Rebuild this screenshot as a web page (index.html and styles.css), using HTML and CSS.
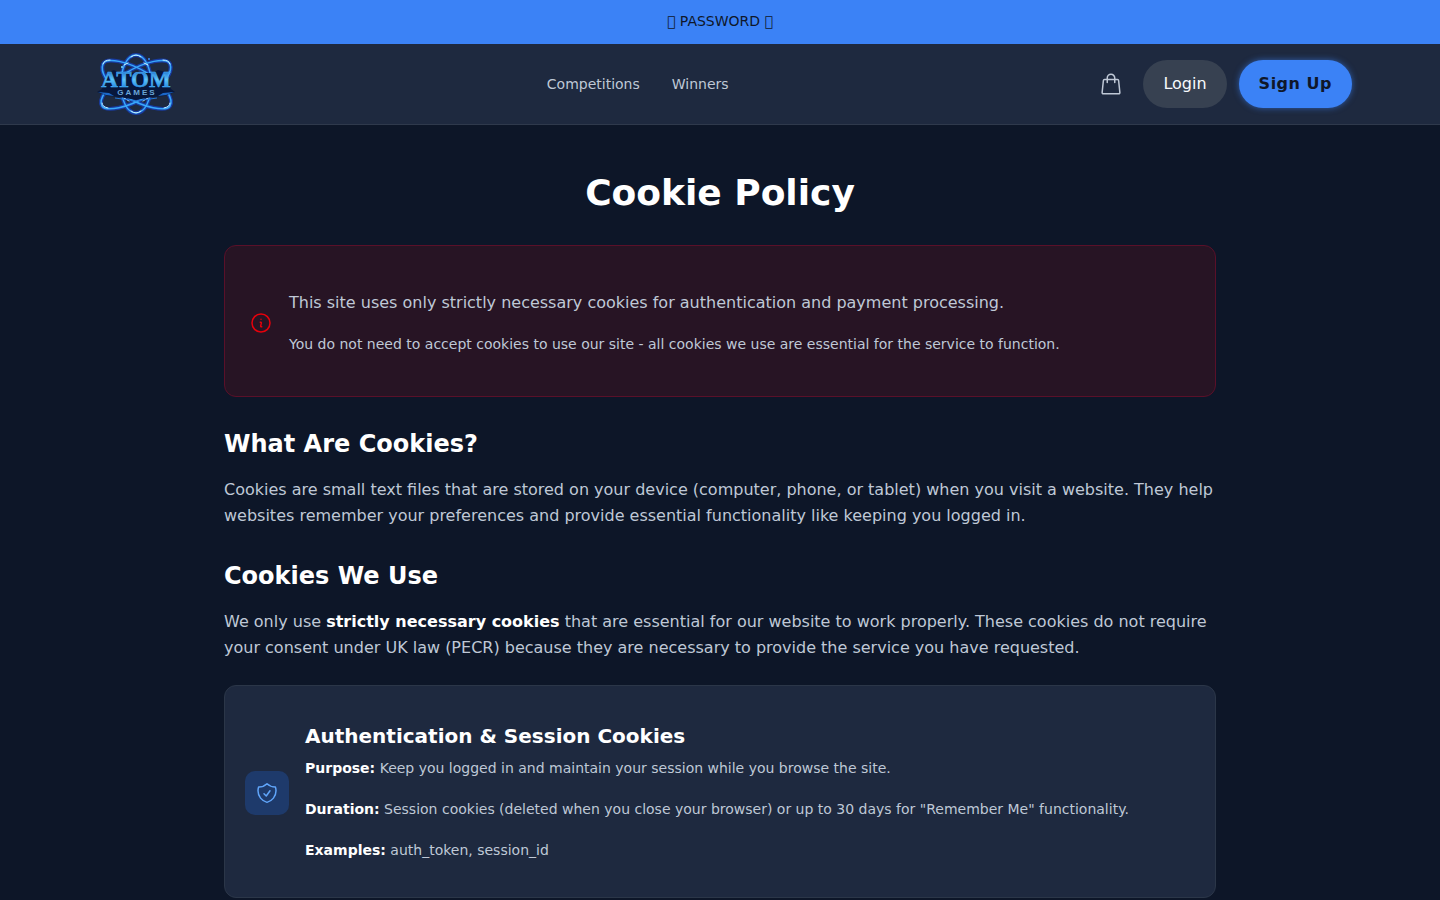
FILE: index.html
```html
<!DOCTYPE html>
<html lang="en">
<head>
  <meta charset="UTF-8">
  <title>Cookie Policy - Atom Games</title>
  <meta name="viewport" content="width=device-width, initial-scale=1.0">
  <link rel="stylesheet" href="styles.css">
</head>
<body>
  <div class="promo-bar">&#xE900; PASSWORD &#xE900;</div>

  <header class="header">
    <div class="header-inner">
      <a href="#" class="logo">
        <svg width="96" height="64" viewBox="0 0 96 64" role="img" aria-label="Atom Games">
          <defs>
            <linearGradient id="metal" x1="0" y1="0" x2="0" y2="1">
              <stop offset="0.15" stop-color="#1d6fd0"/>
              <stop offset="0.5" stop-color="#5cc4f8"/>
              <stop offset="0.85" stop-color="#1f84e6"/>
            </linearGradient>
          </defs>
          <!-- orbit glow -->
          <g fill="none" stroke="#1546d8" stroke-width="4" opacity="0.65">
            <path d="M48 3c9 0 15 13 15 29S57 61 48 61 33 48 33 32 39 3 48 3z"/>
            <path d="M15 12c3-7 25-3 44 9s27 27 23 33-26 2-45-10S12 19 15 12z"/>
            <path d="M82 12c-3-7-25-3-44 9S10 48 14 54s26 2 45-10S85 19 82 12z"/>
          </g>
          <!-- orbits -->
          <g fill="none" stroke="#38a8fa" stroke-width="1.5">
            <path d="M48 3c9 0 15 13 15 29S57 61 48 61 33 48 33 32 39 3 48 3z"/>
            <path d="M15 12c3-7 25-3 44 9s27 27 23 33-26 2-45-10S12 19 15 12z"/>
            <path d="M82 12c-3-7-25-3-44 9S10 48 14 54s26 2 45-10S85 19 82 12z"/>
          </g>
          <g fill="none" stroke="#c9f1ff" stroke-width="1" stroke-linecap="round">
            <path d="M43 5q5-4 10 0M43 59q5 4 10 0"/>
            <path d="M15 12q1-4 7-4M82 12q-1-4-7-4M14 51q0 4 6 5M82 51q0 4-6 5"/>
            <path d="M36 13l4-2M60 13l-4-2M36 46l5 3M60 46l-5 3"/>
          </g>
          <!-- name plate -->
          <path d="M20 20l6-2 6 3h32l6-3 7 2 6 17 4 3-11 4-12 1-16 3-16-3-12-1-11-4 5-3z" fill="#07173c"/>
          <path d="M10 40l11 1 5 3-8-1zM86 40l-11 1-5 3 8-1z" fill="#1b67c8"/>
          <path d="M27 46l21 3 21-3" fill="none" stroke="#2376d8" stroke-width="1"/>
          <text x="48" y="35" class="logo-name">ATOM</text>
          <text x="49" y="43" class="logo-sub">GAMES</text>
          <circle cx="34" cy="15" r="1" fill="#74dcff"/>
          <circle cx="61" cy="7" r="1" fill="#3c8cff"/>
        </svg>
      </a>

      <nav class="nav">
        <a href="#">Competitions</a>
        <a href="#">Winners</a>
      </nav>

      <div class="actions">
        <button class="cart-btn" aria-label="Cart">
          <svg width="24" height="24" viewBox="0 0 24 24" fill="none" stroke="currentColor" stroke-width="1.5" stroke-linecap="round" stroke-linejoin="round">
            <path d="M15.75 10.5V6a3.75 3.75 0 1 0-7.5 0v4.5m11.36-1.99 1.26 12c.07.67-.45 1.24-1.12 1.24H4.25a1.13 1.13 0 0 1-1.12-1.24l1.26-12a1.13 1.13 0 0 1 1.12-1.01h12.98c.57 0 1.06.43 1.12 1.01Z"/>
          </svg>
        </button>
        <button class="btn btn-login">Login</button>
        <button class="btn btn-signup">Sign Up</button>
      </div>
    </div>
  </header>

  <main class="page">
    <h1>Cookie Policy</h1>

    <div class="notice">
      <svg class="notice-icon" width="24" height="24" viewBox="0 0 24 24" fill="none" stroke="currentColor" stroke-width="1.5" stroke-linecap="round" stroke-linejoin="round">
        <circle cx="12" cy="12" r="9"/>
        <path d="m11.25 11.25.04-.02a.75.75 0 0 1 1.06.85l-.7 2.84a.75.75 0 0 0 1.06.85l.04-.02M12 8.25h.01"/>
      </svg>
      <div class="notice-text">
        <p>This site uses only strictly necessary cookies for authentication and payment processing.</p>
        <p class="small">You do not need to accept cookies to use our site - all cookies we use are essential for the service to function.</p>
      </div>
    </div>

    <h2>What Are Cookies?</h2>
    <p>Cookies are small text files that are stored on your device (computer, phone, or tablet) when you visit a website. They help websites remember your preferences and provide essential functionality like keeping you logged in.</p>

    <h2>Cookies We Use</h2>
    <p>We only use <strong>strictly necessary cookies</strong> that are essential for our website to work properly. These cookies do not require your consent under UK law (PECR) because they are necessary to provide the service you have requested.</p>

    <div class="card">
      <div class="card-icon">
        <svg width="24" height="24" viewBox="0 0 24 24" fill="none" stroke="currentColor" stroke-width="1.5" stroke-linecap="round" stroke-linejoin="round">
          <path d="M9 12.75 11.25 15 15 9.75m-3-7.04A11.96 11.96 0 0 1 3.6 6 11.99 11.99 0 0 0 3 9.75c0 5.59 3.82 10.29 9 11.62 5.18-1.33 9-6.03 9-11.62 0-1.31-.21-2.57-.6-3.75h-.15c-3.2 0-6.1-1.25-8.25-3.29Z"/>
        </svg>
      </div>
      <div class="card-body">
        <h3>Authentication &amp; Session Cookies</h3>
        <p class="small"><strong>Purpose:</strong> Keep you logged in and maintain your session while you browse the site.</p>
        <p class="small"><strong>Duration:</strong> Session cookies (deleted when you close your browser) or up to 30 days for "Remember Me" functionality.</p>
        <p class="small"><strong>Examples:</strong> auth_token, session_id</p>
      </div>
    </div>
  </main>
</body>
</html>
```
FILE: styles.css
```css
* { box-sizing: border-box; margin: 0; padding: 0; }

body {
  font-family: "DejaVu Sans", sans-serif;
  font-size: 16px;
  line-height: 26px;
  background: #0d1628;
  color: #bfc8d6;
}

a {
  color: inherit;
  text-decoration: none;
}

button {
  font-family: inherit;
  border: none;
  cursor: pointer;
}

.promo-bar {
  background: #3b82f6;
  color: #0f172a;
  text-align: center;
  font-size: 14px;
  line-height: 20px;
  padding: 11px 16px 13px;
}

/* header */
.header {
  background: #1e293f;
  border-bottom: 1px solid #2f394c;
}

.header-inner {
  max-width: 1280px;
  margin: 0 auto;
  padding: 8px;
  display: flex;
  align-items: center;
  justify-content: space-between;
}

.logo svg {
  display: block;
}

.logo-name {
  font-family: "Liberation Serif", serif;
  font-size: 23px;
  font-weight: bold;
  text-anchor: middle;
  fill: url(#metal);
  stroke: #4db5f5;
  stroke-width: 0.5;
}

.logo-sub {
  font-family: "Liberation Sans", sans-serif;
  font-size: 8px;
  font-weight: bold;
  letter-spacing: 2px;
  text-anchor: middle;
  fill: #6ba6d8;
}

.nav {
  display: flex;
  gap: 32px;
  font-size: 14px;
  line-height: 24px;
}

.actions {
  display: flex;
  align-items: center;
  gap: 12px;
}

.cart-btn {
  display: flex;
  padding: 8px;
  background: none;
  color: #bfc8d6;
}

.btn {
  font-size: 16px;
  line-height: 24px;
  padding: 12px 20px;
  border-radius: 24px;
}

.btn-login {
  background: #374151;
  color: #f8fafc;
}

.btn-signup {
  background: #3b82f6;
  color: #0f172a;
  font-weight: bold;
  letter-spacing: 0.5px;
  box-shadow: 0 0 6px rgba(59, 130, 246, 0.6);
}

/* content */
.page {
  max-width: 1024px;
  margin: 0 auto;
  padding: 44px 16px 40px;
}

h1, h2, h3, strong {
  color: #fff;
  font-weight: bold;
}

h1 {
  font-size: 36px;
  line-height: 48px;
  text-align: center;
  margin-bottom: 28px;
}

h2 {
  font-size: 24px;
  line-height: 34px;
  margin: 30px 0 16px;
}

h3 {
  font-size: 20px;
  line-height: 26px;
  margin-bottom: 8px;
}

.small {
  font-size: 14px;
  line-height: 23px;
}

.small + .small {
  margin-top: 18px;
}

.notice {
  display: flex;
  align-items: center;
  gap: 16px;
  padding: 44px 24px 40px;
  background: #271424;
  border: 1px solid #5a1029;
  border-radius: 12px;
}

.notice-icon {
  flex-shrink: 0;
  color: #e7000b;
}

.notice-text .small {
  margin-top: 17px;
}

.card {
  display: flex;
  align-items: center;
  gap: 16px;
  margin-top: 24px;
  padding: 37px 20px 35px;
  background: #1e293f;
  border: 1px solid #2b3648;
  border-radius: 12px;
}

.card-icon {
  display: flex;
  flex-shrink: 0;
  padding: 10px;
  border-radius: 10px;
  background: #1e3a6b;
  color: #60a5fa;
}
```
